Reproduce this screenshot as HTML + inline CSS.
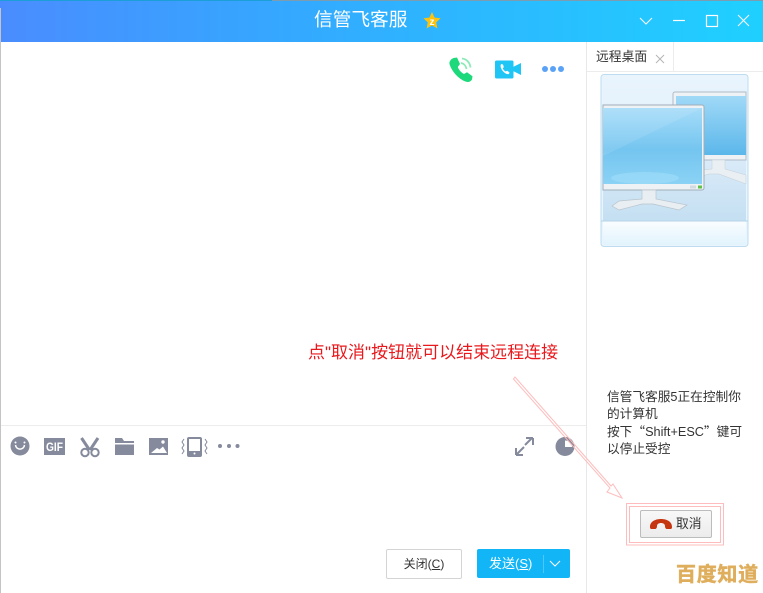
<!DOCTYPE html>
<html><head><meta charset="utf-8">
<style>
html,body{margin:0;padding:0;background:#fff}
body{position:relative;width:763px;height:593px;overflow:hidden;font-family:"Liberation Sans","Noto Sans CJK SC",sans-serif;color:#333}
.a{position:absolute;white-space:nowrap}
.q{font-family:"Noto Sans CJK SC",sans-serif;line-height:0}
</style></head><body>
<div class="a" style="left:0;top:0;width:272px;height:1px;background:#1c9fd8"></div>
<div class="a" style="left:272px;top:0;width:491px;height:1px;background:#7d9cb0"></div>
<div class="a" style="left:0;top:1px;width:763px;height:41px;background:linear-gradient(90deg,#4a8cff 0%,#33aaff 40%,#1fd0ff 100%)"></div>
<div class="a" style="left:0;top:8px;width:1px;height:585px;background:#c4c4c4"></div>
<div class="a" style="left:314px;top:8px;font-size:18.7px;line-height:24px;color:#fff">信管飞客服</div>
<svg class="a" style="left:422px;top:11px" width="20" height="20" viewBox="0 0 20 20"><path d="M10 1l2.600 5.600 6 .7-4.400 4.100 1.200 6L10 14.500 4.600 17.400l1.200-6L1.400 7.300l6-.7z" fill="#fbc30f"/><text x="10" y="14" font-size="10" font-weight="bold" text-anchor="middle" fill="#fff" font-family="Liberation Sans">z</text></svg>
<svg class="a" style="left:630px;top:0" width="133" height="42" fill="none" stroke="#fff" stroke-width="1"><path d="M10 18l6 6 6-6"/><path d="M43 20.500h12" stroke-width="1.200"/><rect x="76.500" y="15.500" width="11" height="11" stroke-width="1.200"/><path d="M108 15l11 11M119 15l-11 11"/></svg>

<svg class="a" style="left:448px;top:56px" width="28" height="28" viewBox="0 0 28 28"><path d="M5.500 2l3.500-.5 3 6.500-2.200 3c1 3 3.500 5.500 6.200 7l3-1.800 5.500 4-.5 3.300c-1.500 2.500-4 3-6.500 2C10.500 23 3.500 15 1.500 8 1 5.500 3 3 5.500 2z" fill="#1ed97c"/><path d="M13 7c3 .5 5 3 5.500 6M14 2.500c5 .5 8 4.500 8.500 9" fill="none" stroke="#8ceab8" stroke-width="1.800"/></svg>
<svg class="a" style="left:494px;top:59px" width="30" height="20" viewBox="0 0 30 20"><rect x="1" y="1.500" width="18.500" height="18" rx="1.500" fill="#1fc6f5"/><path d="M19 8l8-4v12l-8-4z" fill="#1fc6f5"/><path d="M7 5l2 .5.800 2.500-1 1.500c.5 1.200 1.700 2.500 3 3l1.500-.8 2.200 1.800-.5 1.500c-3 1-8-3.500-8.500-8z" fill="#fff"/></svg>
<div class="a" style="left:542px;top:66px;width:6px;height:6px;border-radius:50%;background:#5aa2f5"></div>
<div class="a" style="left:550px;top:66px;width:6px;height:6px;border-radius:50%;background:#5aa2f5"></div>
<div class="a" style="left:558px;top:66px;width:6px;height:6px;border-radius:50%;background:#5aa2f5"></div>

<div class="a" style="left:586px;top:42px;width:1px;height:551px;background:#e8e8e8"></div>
<div class="a" style="left:587px;top:71px;width:176px;height:1px;background:#ececec"></div>
<div class="a" style="left:673px;top:42px;width:1px;height:29px;background:#ececec"></div>
<div class="a" style="left:596px;top:49px;font-size:12.800px;line-height:16px;color:#333">远程桌面</div>
<svg class="a" style="left:654px;top:53px" width="12" height="12" fill="none" stroke="#b5b5b5"><path d="M2 2l8 8M10 2l-8 8"/></svg>

<svg class="a" style="left:600px;top:74px" width="149" height="173" viewBox="0 0 149 173">
<defs>
<linearGradient id="s" x1="0" y1="0" x2="0" y2="1"><stop offset="0" stop-color="#a6dcf9"/><stop offset="0.55" stop-color="#74c5f0"/><stop offset="1" stop-color="#8bd2f5"/></linearGradient>
<linearGradient id="s2" x1="0" y1="0" x2="0" y2="1"><stop offset="0" stop-color="#a0d9f7"/><stop offset="1" stop-color="#5bb7ea"/></linearGradient>
<linearGradient id="b" x1="0" y1="0" x2="0" y2="1"><stop offset="0" stop-color="#e9f4fd"/><stop offset="0.45" stop-color="#e0eefa"/><stop offset="1" stop-color="#c4dff2"/></linearGradient>
<linearGradient id="f" x1="0" y1="0" x2="0" y2="1"><stop offset="0" stop-color="#fafdff"/><stop offset="1" stop-color="#e2f3fd"/></linearGradient>
</defs>
<rect x="1" y="0.500" width="147" height="172" rx="3" fill="#e9f4fd" stroke="#bddcf0"/>
<rect x="3" y="3" width="143" height="144" fill="url(#b)"/>
<rect x="3" y="147" width="143" height="24" rx="2" fill="url(#f)"/>
<path d="M1 147h147" stroke="#b5d4e8"/>
<path d="M146 18H75a2 2 0 0 0-2 2v66h73z" fill="#eef2f5" stroke="#aebcc6"/>
<rect x="76" y="22" width="70" height="59" fill="url(#s2)"/>
<path d="M112 86h13v9l21 6v9l-27-10h-10l-14 4 4-8 13-1z" fill="#e9eff3" stroke="#c3cfd7" stroke-width=".5"/>
<path d="M3 31h99a2 2 0 0 1 2 2v81a2 2 0 0 1-2 2H3z" fill="#eef2f5" stroke="#9eadb8"/>
<path d="M3 34h99v76H3z" fill="url(#s)"/>
<path d="M3 82L102 34H3z" fill="#fff" opacity=".1"/>
<ellipse cx="45" cy="104" rx="34" ry="6" fill="#a0def8" opacity=".6"/>
<rect x="90" y="111.500" width="6" height="3" fill="#d4dbe0"/><rect x="98" y="111.500" width="4" height="3" fill="#62c14a"/>
<path d="M42 116h14v9l31 6-8 5-26-6H42l-23 6-7-4 7-5 23-2z" fill="#e8eef2" stroke="#b8c5cd" stroke-width=".7"/>
</svg>

<div class="a" style="left:308px;top:343px;font-size:17px;line-height:20px;color:#e8181c">点"取消"按钮就可以结束远程连接</div>

<div class="a" style="left:1px;top:425px;width:585px;height:1px;background:#ececec"></div>
<svg class="a" style="left:0;top:430px" width="586" height="32" viewBox="0 0 586 32" fill="#858a9c">
<circle cx="20" cy="16" r="9.500"/><path d="M15.500 15c.5 5.500 8.500 5.500 9 0" fill="none" stroke="#fff" stroke-width="1.500"/><circle cx="15.500" cy="12.500" r="1" fill="#fff"/><circle cx="24.500" cy="12.500" r="1" fill="#fff"/>
<rect x="44" y="8" width="21" height="17"/><text x="54.500" y="21" font-size="12" font-weight="bold" text-anchor="middle" fill="#fff" font-family="Liberation Sans" textLength="17" lengthAdjust="spacingAndGlyphs">GIF</text>
<path d="M81.500 8l8 12M98 8l-8 12" stroke="#858a9c" stroke-width="3" fill="none"/><circle cx="85" cy="22.500" r="3.700" fill="none" stroke="#858a9c" stroke-width="2"/><circle cx="95" cy="22.500" r="3.700" fill="none" stroke="#858a9c" stroke-width="2"/>
<path d="M115 8h7l2 3h10v2h-19zM115 14.500h19V25h-19z"/>
<path d="M149 8h19v17h-19z"/><path d="M151 23l6-5 2.500 1.500 3.500-3 4 6.500z" fill="#fff"/><circle cx="163" cy="12" r="1.700" fill="#fff"/>
<rect x="188" y="8" width="13" height="18" rx="1" fill="none" stroke="#858a9c" stroke-width="2"/><rect x="188" y="21" width="13" height="5"/><circle cx="194.500" cy="23.500" r="1" fill="#fff"/>
<path d="M184 9l-2 3 2 3-2 3 2 3-2 3M205 9l2 3-2 3 2 3-2 3 2 3" fill="none" stroke="#858a9c"/>
<circle cx="220" cy="16" r="2"/><circle cx="229" cy="16" r="2"/><circle cx="237.500" cy="16" r="2"/>
<path d="M525 15l7-7M533 8h-7M533 8v7M516 25l8-8M516 25v-7M516 25h7" fill="none" stroke="#858a9c" stroke-width="2"/>
<circle cx="565" cy="16.500" r="9.500"/><path d="M565 10.500v6.500h7c0-3.500-3-6.500-7-6.500z" fill="#fff"/>
</svg>

<svg class="a" style="left:505px;top:370px" width="240" height="180" fill="none" stroke="#ffbcbc" stroke-width="1">
<path d="M8.500 9L105 118l-3 4 15 6-9-14-2 2L10 7z"/>
<rect x="121.500" y="133.500" width="97" height="41.500"/><rect x="124.500" y="136.500" width="91" height="36"/>
</svg>

<div class="a" style="left:607px;top:389px;font-size:12.700px;line-height:17.400px;color:#333;white-space:normal;width:150px">信管飞客服5正在控制你<br>的计算机<br>按下<span class="q">“</span>Shift+ESC<span class="q">”</span>键可<br>以停止受控</div>

<div class="a" style="left:640px;top:510px;width:70px;height:26px;border:1px solid #bcbcbc;border-radius:2px;background:linear-gradient(#f8f8f8,#ececec)"></div>
<svg class="a" style="left:650px;top:518px" width="22" height="11" viewBox="0 0 22 11"><path d="M0 9C0 3 6 1 11 1s11 2 11 8c0 2-1 2-2 2h-3c-1 0-2-1-2-3 0-2-2-3-4-3S7 6 7 8c0 2-1 3-2 3H2c-1 0-2 0-2-2z" fill="#c5350f"/></svg>
<div class="a" style="left:676px;top:515px;font-size:12.800px;line-height:18px;color:#333">取消</div>

<div class="a" style="left:386px;top:549px;width:74px;height:28px;border:1px solid #d4d4d4;border-radius:2px;text-align:center;font-size:12px;line-height:28px;color:#333">关闭(<u>C</u>)</div>
<div class="a" style="left:477px;top:549px;width:93px;height:29px;background:#12b6f7;border-radius:2px"></div>
<div class="a" style="left:489px;top:555px;font-size:13px;line-height:18px;color:#fff">发送(<u>S</u>)</div>
<div class="a" style="left:543px;top:555px;width:1px;height:18px;background:#4cc8f8"></div>
<svg class="a" style="left:549px;top:559px" width="12" height="9" fill="none" stroke="#fff"><path d="M1 2l5 5 5-5"/></svg>

<div class="a" style="left:676px;top:563px;font-size:20px;line-height:24px;font-weight:bold;color:#dfae5c;letter-spacing:.7px;-webkit-text-stroke:.5px #dfae5c">百度知道</div>
</body></html>
